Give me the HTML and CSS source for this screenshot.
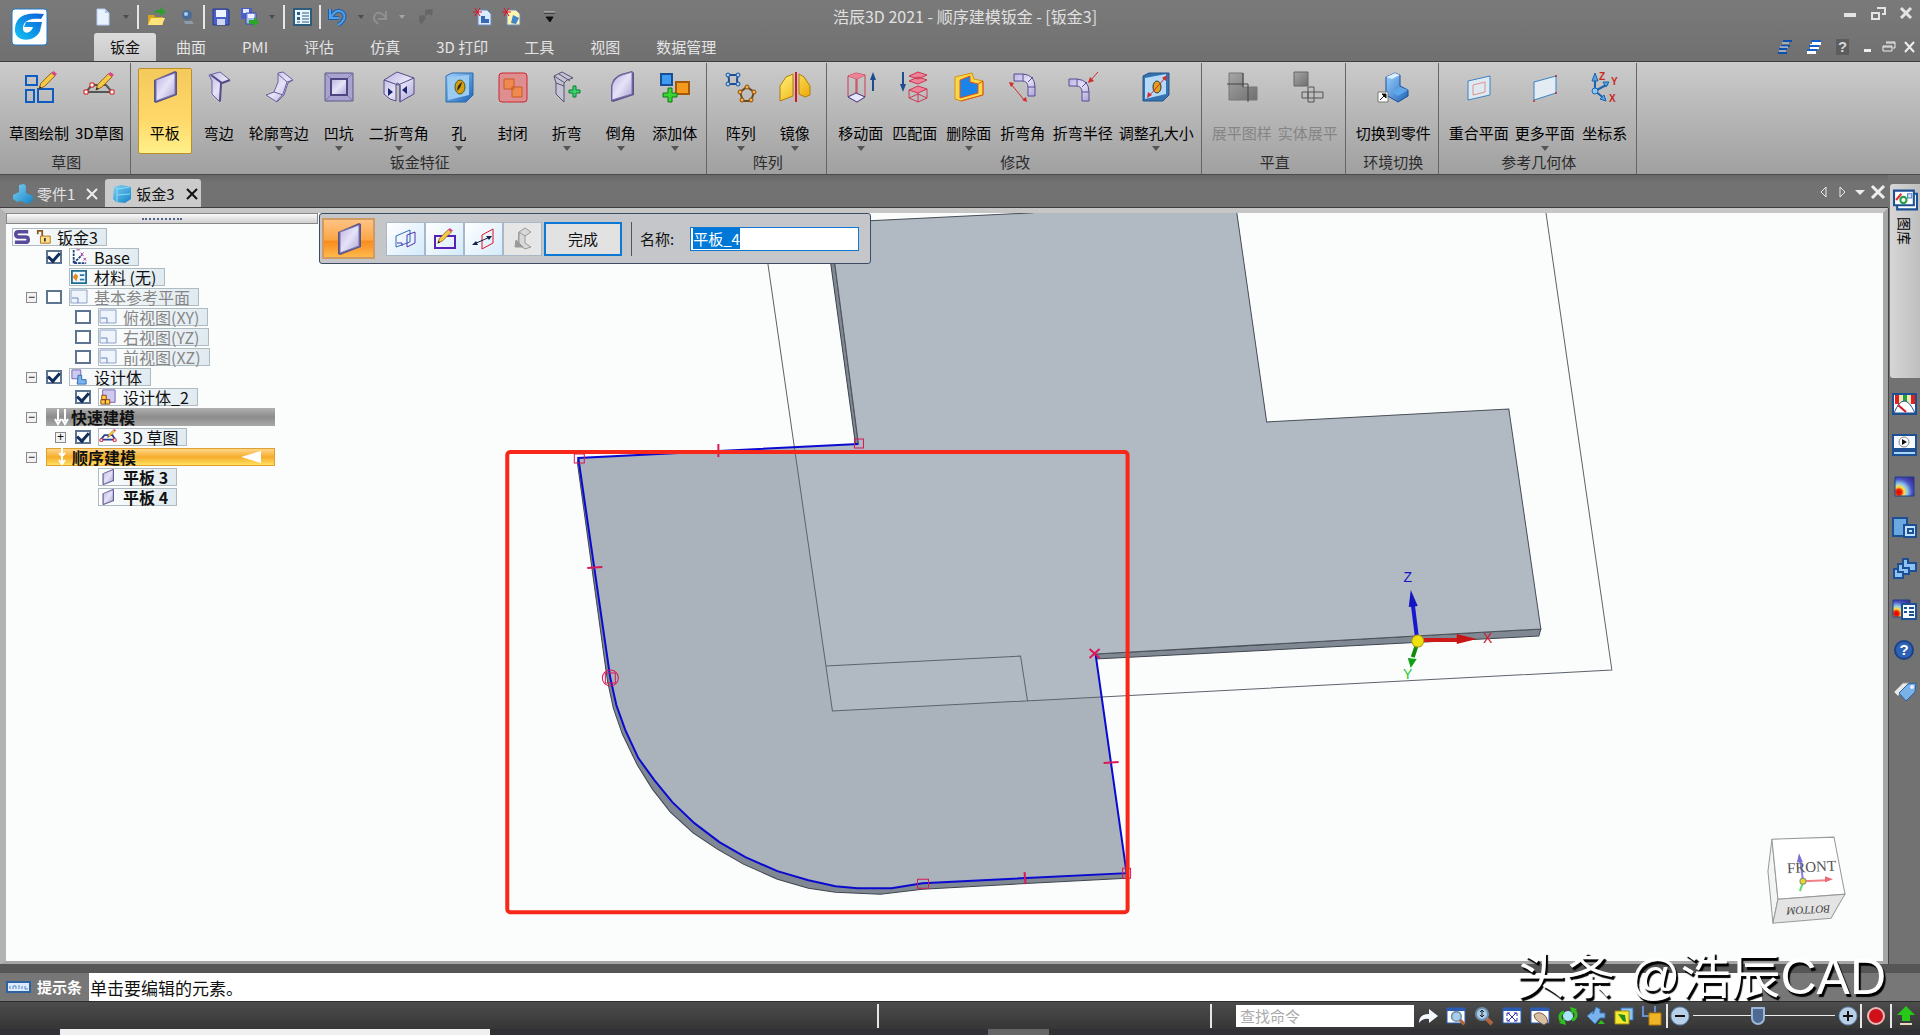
FILE: index.html
```
<!DOCTYPE html>
<html lang="zh-CN">
<head>
  <meta charset="UTF-8" />
  <meta name="viewport" content="width=device-width, initial-scale=1.0"/>
  <title>浩辰3D 2021</title>
  <link rel="stylesheet" href="styles.css">
</head>
<body>
  <svg class="defs" aria-hidden="true">
    <defs>
      <linearGradient id="gLilac" x1="0" y1="0" x2="1" y2="1"><stop offset="0" stop-color="#b9b3e0"/><stop offset=".5" stop-color="#e6e3f8"/><stop offset="1" stop-color="#a9a3d4"/></linearGradient>
      <linearGradient id="gBlue" x1="0" y1="0" x2="1" y2="1"><stop offset="0" stop-color="#9fd4ff"/><stop offset="1" stop-color="#1b62b8"/></linearGradient>
      <linearGradient id="gCyan" x1="0" y1="0" x2="1" y2="1"><stop offset="0" stop-color="#7fd0f5"/><stop offset="1" stop-color="#1583c4"/></linearGradient>
      <linearGradient id="gGold" x1="0" y1="0" x2="1" y2="1"><stop offset="0" stop-color="#fff27a"/><stop offset="1" stop-color="#eca400"/></linearGradient>
      <linearGradient id="gGray" x1="0" y1="0" x2="1" y2="1"><stop offset="0" stop-color="#a5a5a5"/><stop offset="1" stop-color="#6f6f6f"/></linearGradient>
      <linearGradient id="gLogo" x1="1" y1="0" x2="0" y2="1"><stop offset="0" stop-color="#0b5fd8"/><stop offset="1" stop-color="#12c4f4"/></linearGradient>
      <radialGradient id="gHeat" cx="0.2" cy="0.8" r="1"><stop offset="0" stop-color="#e00000"/><stop offset=".15" stop-color="#f02000"/><stop offset=".28" stop-color="#ffe040"/><stop offset=".45" stop-color="#90c8e8"/><stop offset=".7" stop-color="#4a50c0"/><stop offset="1" stop-color="#3b2a90"/></radialGradient>
      <symbol id="plate" viewBox="0 0 32 32"><path d="M5 9 26 0l2 1v23L7 32l-2-1z" fill="#5b5488"/><path d="M7 9 26 2v21L7 30z" fill="url(#gLilac)" stroke="#7d75b0"/></symbol>
      <symbol id="refplane" viewBox="0 0 18 16"><path d="M1 1h16v13H1z" fill="#eef4fa" stroke="#8ba3cc"/><path d="M2 9h6v5" fill="none" stroke="#6a86c0"/></symbol>
      <symbol id="pencil" viewBox="0 0 20 20"><path d="M1 19 3 13 14 2l4 3L7 16z" fill="#f7c948" stroke="#8a5a10"/><path d="m14 2 2-2 4 3-2 2z" fill="#e0408c"/><path d="m1 19 1-3 2 2z" fill="#222"/></symbol>
      <symbol id="magnify" viewBox="0 0 20 20"><path d="m12 12 6 6" stroke="#b0643a" stroke-width="4"/><circle cx="8" cy="8" r="6" fill="#a8cdea" stroke="#6f8ca8" stroke-width="2"/></symbol>
    </defs>
  </svg>

  <header class="header">
    <button class="logo" aria-label="应用程序">
      <svg viewBox="0 0 37 38"><rect x="1" y="1" width="35" height="36" rx="3" fill="#fff" stroke="#1d78c8"/><path d="M33 6C22 5 5 4 4 21c-1 14 20 14 25 2l2-9H15l-2 5h9c-2 7-11 8-10 0 1-7 9-9 18-8z" fill="url(#gLogo)"/></svg>
    </button>
    <div class="quick">
      <button aria-label="新建"><svg viewBox="0 0 20 20"><path d="M4 2h8l4 4v12H4z" fill="#e9f2ff" stroke="#b7cbee"/><path d="M12 2v4h4" fill="#a9c4ee"/></svg></button>
      <i class="caret dim"></i>
      <i class="sep"></i>
      <button aria-label="打开"><svg viewBox="0 0 20 20"><path d="M2 8h6l1 2h8v8H2z" fill="#d9a520"/><path d="m2 18 3-7h14l-3 7z" fill="#ffe27a"/><path d="M8 7q1-5 6-4V0l6 5-6 4V6q-4-1-6 1z" fill="#2f9e2f"/></svg></button>
      <button aria-label="截图"><svg viewBox="0 0 20 20"><circle cx="10" cy="8" r="5" fill="#4b6c96"/><circle cx="9" cy="7" r="2" fill="#a8cdf5"/><path d="M7 14h8l2 3H8z" fill="#8c9aaa"/></svg></button>
      <i class="sep"></i>
      <button aria-label="保存"><svg viewBox="0 0 20 20"><path d="M2 2h15l1 1v15H2z" fill="#4b5fc8" stroke="#26388c"/><path d="M5 3h10v7H5z" fill="#eef3ff"/><path d="M6 12h8v6H6z" fill="#cfd6f2"/></svg></button>
      <button aria-label="另存为"><svg viewBox="0 0 20 20"><path d="M2 1h11v11H2z" fill="#4b5fc8"/><path d="M4 2h6v4H4z" fill="#e4ebff"/><path d="M7 6h10v11H7z" fill="#a9b6ee" stroke="#3b4db0"/><path d="M9 7h6v4H9z" fill="#eef3ff"/><path d="M10 13h5v-3l5 5-5 5v-3h-5z" fill="#27a827"/></svg></button>
      <i class="caret dim"></i>
      <i class="sep"></i>
      <button aria-label="属性"><svg viewBox="0 0 20 20"><path d="M2 2h17v16H2z" fill="#eaf6ff" stroke="#2c5d7c" stroke-width="2"/><path d="M5 5h3v3H5zm0 5h3v3H5z" fill="#2c5d7c"/><path d="M10 6h7M10 9h7M10 12h7M10 15h7M5 15h3" stroke="#2c5d7c"/></svg></button>
      <i class="sep"></i>
      <button aria-label="撤销"><svg viewBox="0 0 20 20"><path d="M3 2v9h9M4 10q4-7 9-6 6 2 4 8-2 4-6 6" fill="none" stroke="#1f5ea8" stroke-width="4"/><path d="M3 2v9h9M4 10q4-7 9-6 6 2 4 8-2 4-6 6" fill="none" stroke="#4fa0ec" stroke-width="2"/></svg></button>
      <i class="caret dim"></i>
      <button aria-label="重做"><svg viewBox="0 0 20 20"><path d="M16 4v8H8M16 11q-4-6-9-5-5 3-2 8l3 3" fill="none" stroke="#8f8f8f" stroke-width="2"/></svg></button>
      <i class="caret light"></i>
      <button aria-label="更新"><svg viewBox="0 0 20 20"><path d="m9 3 8-1-1 7-3-2-4 2zM3 9l5-1 2 3-4 6-3-2z" fill="#666"/></svg></button>
      <i></i>
      <button aria-label="新建零件"><svg viewBox="0 0 20 20"><path d="M5 3h9l4 4v11H5z" fill="#dceafd" stroke="#6f8cc0"/><path d="M8 14v-5h4v3h4v4H8z" fill="#3569b8"/><path d="M0 5h9M2 1l5 8M7 1 2 9" stroke="#e01020"/></svg></button>
      <button aria-label="新建钣金"><svg viewBox="0 0 20 20"><path d="M5 3h9l4 4v11H5z" fill="#fff3b0" stroke="#6f8cc0"/><path d="m9 16 2-8 6 3-3 6z" fill="#3f86c8"/><path d="M0 5h9M2 1l5 8M7 1 2 9" stroke="#e01020"/></svg></button>
      <button aria-label="自定义"><svg viewBox="0 0 20 20"><path d="M4 6h11M6 10h7l-3 5z" fill="#111" stroke="#111"/><path d="M4 5h11" stroke="#ccc"/></svg></button>
    </div>
    <h1 class="title">浩辰3D 2021 - 顺序建模钣金 - [钣金3]</h1>
    <div class="win-controls">
      <button aria-label="最小化"><svg viewBox="0 0 16 16"><path d="M2 8h12v4H2z" fill="#e4e4e4"/></svg></button>
      <button aria-label="还原"><svg viewBox="0 0 16 16"><path d="M7 3h8v6h-3M2 8h7v6H2z" fill="none" stroke="#e4e4e4" stroke-width="2"/></svg></button>
      <button aria-label="关闭"><svg viewBox="0 0 16 16"><path d="m3 3 10 10M13 3 3 13" stroke="#e4e4e4" stroke-width="3"/></svg></button>
    </div>
    <nav class="menu">
      <button class="menu-tab active">钣金</button>
      <button class="menu-tab">曲面</button>
      <button class="menu-tab">PMI</button>
      <button class="menu-tab">评估</button>
      <button class="menu-tab">仿真</button>
      <button class="menu-tab">3D 打印</button>
      <button class="menu-tab">工具</button>
      <button class="menu-tab">视图</button>
      <button class="menu-tab">数据管理</button>
      <div class="mdi">
        <button class="wide" aria-label="展开"><svg viewBox="0 0 16 16"><path d="M6 2h9M4 7h9M2 10h8M1 14h9" stroke="#0d4fae" stroke-width="2"/><path d="M5 4h7M3 8h8M2 12h7" stroke="#d4e8ff"/></svg></button>
        <button class="wide" aria-label="层叠"><svg viewBox="0 0 16 16"><path d="M6 1h9v5H6zM4 5h9v5H4zM1 10h9v5H1z" fill="#fff"/><path d="M5 2h10M3 7h10M1 11h10" stroke="#1560c8" stroke-width="2"/></svg></button>
        <button class="wide help">?</button>
        <button aria-label="最小化文档"><svg viewBox="0 0 16 16"><path d="M4 10h7v3H4z" fill="#eee"/></svg></button>
        <button aria-label="还原文档"><svg viewBox="0 0 16 16"><path d="M5 3h9v6h-2M2 7h9v5H2zM2 8h9M5 4h9" fill="none" stroke="#eee"/></svg></button>
        <button aria-label="关闭文档"><svg viewBox="0 0 16 16"><path d="m3 3 9 10M12 3 3 13" stroke="#eee" stroke-width="2"/></svg></button>
      </div>
    </nav>
  </header>

  <section class="ribbon">
    <div class="group first">
      <div class="tools">
        <button class="tool"><svg viewBox="0 0 32 32"><g fill="none" stroke="#0e5bc4" stroke-width="2"><path d="M3 5h11v9H3zM3 19h8v12H3zM15 18h15v13H15z"/></g><use href="#pencil" x="15" y="0" width="19" height="19"/></svg><span>草图绘制</span></button>
        <button class="tool"><svg viewBox="0 0 32 32"><path d="M3 28h26" stroke="#bbb" stroke-width="3"/><path d="M3 21 9 14h14l6 7z" fill="none" stroke="#555" stroke-width="2"/><path d="M1 19h4v4H1zM27 19h4v4h-4zM7 12h4v4H7z" fill="#fff" stroke="#d01818"/><use href="#pencil" x="12" y="1" width="19" height="19"/></svg><span>3D草图</span></button>
      </div>
      <div class="group-name">草图</div>
    </div>
    <div class="group">
      <div class="tools">
        <button class="tool active"><svg><use href="#plate"/></svg><span>平板</span></button>
        <button class="tool"><svg viewBox="0 0 32 32"><path d="M6 4 17 1l10 8-9 3-1 19-8-8V10z" fill="url(#gLilac)" stroke="#6a639c"/><path d="m8 4 11 8 8-3M18 12l-1 18" fill="none" stroke="#544d88" stroke-width="2"/></svg><span>弯边</span></button>
        <button class="tool"><svg viewBox="0 0 32 32"><path d="m15 2 5-1 10 8-5 3-4 12-7 7-11-7 8-3 4-10z" fill="url(#gLilac)" stroke="#6a639c"/><path d="m15 3 9 8 6-2M24 11l-4 12-6 7M11 21l9 3" fill="none" stroke="#6a639c"/></svg><span>轮廓弯边</span><i class="drop"></i></button>
        <button class="tool"><svg viewBox="0 0 32 32"><path d="M2 2h28v28H2z" fill="#a9a3cf" stroke="#5b5488"/><path d="m2 2 6 6v16l-6 6M30 2l-6 6M30 30l-6-6" fill="none" stroke="#7c75aa"/><path d="M8 8h16v16H8z" fill="url(#gLilac)" stroke="#4d4680" stroke-width="2"/></svg><span>凹坑</span><i class="drop"></i></button>
        <button class="tool"><svg viewBox="0 0 32 32"><path d="M1 9 14 1l17 6v16l-9 5-5 3V14q-3-4-4 0v16l-6-2-6-5z" fill="url(#gLilac)" stroke="#544d88"/><path d="m1 9 14 5 16-7M17 14v17" fill="none" stroke="#544d88"/><path d="m5 17 5 4-5 4zM24 15v8l-5-4z" fill="#1d2470"/></svg><span>二折弯角</span><i class="drop"></i></button>
        <button class="tool"><svg viewBox="0 0 32 32"><path d="M3 5 9 2h21v22l-7 7H3z" fill="url(#gBlue)" stroke="#2a6aa8"/><path d="M5 6 26 4v20L5 29z" fill="#9ccbf1"/><ellipse cx="17" cy="16" rx="5" ry="7" fill="#d89d10" stroke="#4d5a20"/><path d="M19 11q-1 6-5 9 0-6 5-9" fill="#2b2b20"/></svg><span>孔</span><i class="drop"></i></button>
        <button class="tool"><svg viewBox="0 0 32 32"><rect x="2" y="2" width="28" height="29" rx="3" fill="#de8e8e" stroke="#cf2533"/><path d="M7 8h10v10H7zM15 16h10v10H15z" fill="#ef8a4e" stroke="#c55a26"/></svg><span>封闭</span></button>
        <button class="tool"><svg viewBox="0 0 32 32"><path d="m3 5 8-4 11 6-6 2-3 3v19l-8-8V12z" fill="#c6c4d4" stroke="#555270"/><path d="m8 3 11 7M5 12l8 3M3 5l11 7" fill="none" stroke="#555270"/><path d="M22 15h3v4h4v3h-4v4h-3v-4h-4v-3h4z" fill="#3bd46a" stroke="#0d7c34"/></svg><span>折弯</span><i class="drop"></i></button>
        <button class="tool"><svg viewBox="0 0 32 32"><path d="M6 15Q8 6 16 3l11-3 2 2v22L8 31l-2-1z" fill="#5b5488"/><path d="M7 15Q9 7 17 4l10-3v22L7 29z" fill="url(#gLilac)" stroke="#7d75b0"/></svg><span>倒角</span><i class="drop"></i></button>
        <button class="tool"><svg viewBox="0 0 32 32"><path d="M2 3h11v11H2z" fill="#3f9bf2" stroke="#174f96" stroke-width="2"/><path d="M17 11h13v12H17z" fill="#f59a1d" stroke="#a05a08" stroke-width="2"/><path d="M9 17h4v5h5v4h-5v5H9v-5H4v-4h5z" fill="#38d434" stroke="#107a12"/></svg><span>添加体</span><i class="drop"></i></button>
      </div>
      <div class="group-name">钣金特征</div>
    </div>
    <div class="group">
      <div class="tools">
        <button class="tool"><svg viewBox="0 0 32 32"><path d="M3 4h10q-2 5 0 9H3q2-4 0-9z" fill="none" stroke="#1d4f94" stroke-width="2"/><g fill="#9fd0ff" stroke="#1d4f94"><circle cx="3" cy="4" r="2"/><circle cx="13" cy="4" r="2"/><circle cx="3" cy="13" r="2"/><circle cx="13" cy="13" r="2"/></g><path d="m22 16 7 5-3 9h-8l-3-9z" fill="none" stroke="#6a4a20" stroke-width="2"/><g fill="#ffb14a" stroke="#8a4d0c"><circle cx="22" cy="16" r="2"/><circle cx="29" cy="21" r="2"/><circle cx="26" cy="29" r="2"/><circle cx="17" cy="29" r="2"/><circle cx="15" cy="21" r="2"/></g></svg><span>阵列</span><i class="drop"></i></button>
        <button class="tool"><svg viewBox="0 0 32 32"><path d="m1 15 6-9 7-3v22L1 30zM20 3l5 3 6 9v9l-5 2-6-3z" fill="url(#gGold)" stroke="#b07c08"/><path d="M17 1v30" stroke="#d01822" stroke-width="2"/></svg><span>镜像</span><i class="drop"></i></button>
      </div>
      <div class="group-name">阵列</div>
    </div>
    <div class="group">
      <div class="tools">
        <button class="tool"><svg viewBox="0 0 32 32"><path d="m3 5 8-3 9 2-8 4zM3 5v21l9 5V8M20 4v22l-8 5M3 26l8-4 9 4M11 2v20" fill="none" stroke="#c93a55"/><path d="m3 5 8-3 9 2-8 4z" fill="#ee8296"/><path d="m3 26 8-4 9 4-8 5z" fill="#e6e6ff" stroke="#444488"/><path d="M28 20V7" stroke="#1c4d90" stroke-width="2"/><path d="m28 1 3 8h-6z" fill="#1c4d90"/></svg><span>移动面</span><i class="drop"></i></button>
        <button class="tool"><svg viewBox="0 0 32 32"><path d="M4 1v14" stroke="#1c4d90" stroke-width="2"/><path d="m4 21-3-8h6z" fill="#1c4d90"/><g fill="#ee8296" stroke="#c93a55"><path d="m10 5 9-4 9 3-9 4zM10 10l9-4 9 3-9 4zM10 19l9-4 9 3-9 4z"/><path d="M10 19v8l9 4 9-4v-9M19 22v9M10 27l9-4 9 4" fill="none"/></g></svg><span>匹配面</span></button>
        <button class="tool"><svg viewBox="0 0 32 32"><path d="M2 6 19 2l2 6 9 2v14L8 30l-6-2z" fill="#f8d84a" stroke="#d89008"/><path d="M7 9 17 5v6l8 2v9L7 27z" fill="#1a83ea" stroke="#e2521c"/><path d="m25 13 5-3v14L8 30" fill="none" stroke="#e2521c"/></svg><span>删除面</span><i class="drop"></i></button>
        <button class="tool"><svg viewBox="0 0 32 32"><path d="M7 3h9q12 1 12 13v9h-7v-9q0-6-6-6H7z" fill="url(#gLilac)" stroke="#564c94"/><path d="M16 3v7M21 16h7M26 6l-5 5" stroke="#564c94"/><path d="m4 13 14 17" stroke="#d32a2a"/><path d="m2 11 5 1-3 4zM20 31l-5-2 4-3z" fill="#d32a2a"/></svg><span>折弯角</span></button>
        <button class="tool"><svg viewBox="0 0 32 32"><path d="M2 8h8q12 1 12 13v9h-7v-9q0-6-6-6H2z" fill="url(#gLilac)" stroke="#564c94"/><path d="M10 8v7M15 21h7M20 11l-5 5" stroke="#564c94"/><path d="m31 1-8 9" stroke="#d32a2a"/><path d="m21 12 2-6 4 4z" fill="#d32a2a"/></svg><span>折弯半径</span></button>
        <button class="tool"><svg viewBox="0 0 32 32"><path d="M3 5 9 2h20v22l-6 6H3z" fill="#3572b0" stroke="#245488"/><path d="M5 7 26 3v20L5 28z" fill="#b4daf8"/><ellipse cx="17" cy="16" rx="4" ry="6" fill="#e0a020" stroke="#333"/><path d="M9 25 25 7" stroke="#d32a2a"/><path d="m27 4-1 6-4-3zM7 27l1-6 4 3z" fill="#d32a2a"/></svg><span>调整孔大小</span><i class="drop"></i></button>
      </div>
      <div class="group-name">修改</div>
    </div>
    <div class="group">
      <div class="tools">
        <button class="tool" disabled><svg viewBox="0 0 32 32"><path d="M3 2h14v14h14v13H3z" fill="url(#gGray)" stroke="#777"/><path d="M1 13h21v18M17 2v14" fill="none" stroke="#444"/></svg><span>展平图样</span></button>
        <button class="tool" disabled><svg viewBox="0 0 32 32"><path d="M2 1h14v14H2z" fill="url(#gGray)" stroke="#666"/><path d="M10 21h21v6H10zM16 16v15M22 16v15M16 16h6M16 31h6M16 21v6" fill="none" stroke="#555"/></svg><span>实体展平</span></button>
      </div>
      <div class="group-name">平直</div>
    </div>
    <div class="group">
      <div class="tools">
        <button class="tool"><svg viewBox="0 0 32 32"><path d="m9 6 9-4 5 2v11l8 4v6l-10 6-12-7z" fill="url(#gBlue)" stroke="#1a4e96"/><path d="m9 6 9-4 5 2-8 4z" fill="#d9eeff"/><path d="m15 21 8-5 8 3-10 6z" fill="#5ea6ea"/><path d="M1 21h10v10H1z" fill="#fff" stroke="#777"/><path d="m3 29 4-4M5 23h4v4z" fill="#111" stroke="#111"/></svg><span>切换到零件</span></button>
      </div>
      <div class="group-name">环境切换</div>
    </div>
    <div class="group">
      <div class="tools">
        <button class="tool"><svg viewBox="0 0 32 32"><path d="m5 10 22-5v19L5 29z" fill="#dfe9f1" stroke="#3c82c4"/><path d="m10 14 12-3v10l-12 3z" fill="none" stroke="#e09090"/></svg><span>重合平面</span></button>
        <button class="tool"><svg viewBox="0 0 32 32"><path d="m5 11 22-6v17L5 29z" fill="#e3ecf3" stroke="#3c82c4"/><g fill="#c02828"><circle cx="27" cy="5" r="1"/><circle cx="27" cy="22" r="1"/><circle cx="5" cy="30" r="1"/></g></svg><span>更多平面</span><i class="drop"></i></button>
        <button class="tool"><svg viewBox="0 0 32 32"><path d="M6 20V6M6 20l13-7M6 20l10 8" stroke="#1d62b0" stroke-width="2"/><path d="m6 2 3 8H3zM20 11h-6l3 5zM17 30l-6-2 4-4z" fill="#5ba2e0" stroke="#1d62b0"/><circle cx="6" cy="20" r="3" fill="#8ec8f5" stroke="#1d62b0"/><g class="axis-name"><text x="10" y="9">Z</text><text x="22" y="14">Y</text><text x="20" y="31">X</text></g></svg><span>坐标系</span></button>
      </div>
      <div class="group-name">参考几何体</div>
    </div>
  </section>

  <div class="work">
    <main class="main">
      <div class="doc-tabs">
        <div class="doc-tab">
          <svg viewBox="0 0 22 20"><path d="m6 1 5-1 2 2v7l7 3v5l-6 3-6-3-4 1-4-3v-4l6-3z" fill="url(#gCyan)"/></svg>
          <span>零件1</span>
          <button aria-label="关闭零件1"><svg viewBox="0 0 12 12"><path d="m1 1 10 10M11 1 1 11" stroke="#eee" stroke-width="2"/></svg></button>
        </div>
        <div class="doc-tab active">
          <svg viewBox="0 0 22 20"><path d="m2 3 7-2 10 2v12l-6 4-9-1-3-3z" fill="url(#gCyan)"/><path d="m2 3 3 2v13M5 5l13-2M5 11l13-1" fill="none" stroke="#8adcf8"/></svg>
          <span>钣金3</span>
          <button aria-label="关闭钣金3"><svg viewBox="0 0 12 12"><path d="m1 1 10 10M11 1 1 11" stroke="#111" stroke-width="2"/></svg></button>
        </div>
        <div class="doc-nav">
          <button aria-label="上一个"><svg viewBox="0 0 16 16"><path d="M10 3v10L5 8z" fill="none" stroke="#eee"/></svg></button>
          <button aria-label="下一个"><svg viewBox="0 0 16 16"><path d="M6 3v10l5-5z" fill="none" stroke="#eee"/></svg></button>
          <button aria-label="文档列表"><svg viewBox="0 0 16 16"><path d="M3 6h10l-5 5z" fill="#eee"/></svg></button>
          <button aria-label="关闭当前文档"><svg viewBox="0 0 16 16"><path d="m2 2 12 12M14 2 2 14" stroke="#eee" stroke-width="3"/></svg></button>
        </div>
      </div>

      <div class="viewport">
        <svg class="model" viewBox="6 213 1876 748" preserveAspectRatio="xMidYMid slice">
          <defs><clipPath id="plane"><path d="M759 205 1544 205 1611 670 832 711z"/></clipPath></defs>
          <!-- sheet thickness -->
          <path d="M858 444 829 223l-4 2 30 219zM1095 654l445-25-2 7-443 23z" fill="#808894" stroke="#3f454d"/>
          <path d="M578 458 577 462 607 680 613 708 622 734 637 765 652 789 670 812 693 833 717 849 743 864 777 879 808 888 835 892 880 894 922 889 1126 878V873L922 870z" fill="#808894" stroke="#3f454d"/>
          <!-- face -->
          <path id="face" d="M829 223 1033 213 1033 205 1235 205 1266 422 1508 409 1540 629 1095 654 1126 873 922 883 891 888 857 888 835 886 808 880 777 871 745 857 719 842 694 823 672 802 654 780 638 758 625 730 616 705 610 678 578 458 858 444z" fill="#aab2bb"/>
          <use href="#face" clip-path="url(#plane)" class="face-light"/>
          <path d="M858 444 829 223 1033 213M1235 205l31 217 242-13 32 220-445 25" fill="none" stroke="#4a5058"/>
          <!-- reference plane -->
          <path d="M759 205 832 711 1611 670 1544 205M825 666l195-10 7 45" fill="none" stroke="#5c636b"/>
          <!-- sketch -->
          <path d="M858 444 578 458 610 678 616 705 625 730 638 758 654 780 672 802 694 823 719 842 745 857 777 871 808 880 835 886 857 888 891 888 922 883 1126 873 1095 654" fill="none" stroke="#0a0ad0" stroke-width="2"/>
          <g fill="none" stroke="#d81858">
            <path d="M854 439h9v9h-9zM574 454h10v9h-10zM917 879h11v9h-11zM1122 868h8v10h-8zM605 673h10v10h-10z"/>
            <circle cx="610" cy="678" r="8"/>
            <path d="M718 444v13M587 568l15-1M1103 763l15-1M1024 872l1 12M1089 649l10 9M1099 649l-10 9" stroke-width="2"/>
          </g>
          <rect x="507" y="452" width="620" height="460" rx="3" fill="none" stroke="#f7281a" stroke-width="4"/>
          <!-- origin triad -->
          <path d="M1416 636 1412 604" stroke="#1818d0" stroke-width="4"/><path d="m1410 590 7 16-9 1z" fill="#1414c0"/>
          <path d="M1420 640h38" stroke="#d01818" stroke-width="4"/><path d="m1476 639-20-5v10z" fill="#c81414"/>
          <path d="m1416 645-4 12" stroke="#108a10" stroke-width="4"/><path d="m1407 658 9 1-6 9z" fill="#10a018"/>
          <circle cx="1417" cy="641" r="6" fill="#f0e010" stroke="#a89a10"/>
          <g class="triad-name">
            <text x="1407" y="582" fill="#1414c8">Z</text>
            <text x="1487" y="643" fill="#d01830">X</text>
            <text x="1407" y="679" fill="#20c830">Y</text>
          </g>
          <!-- view cube -->
          <g fill="#fff" stroke="#999">
            <path d="M1771 839l-4 32 5 52 5-24z" fill="#f4f4f4"/>
            <path d="m1771 839 62-2 11 57-67 5z"/>
            <path d="m1777 899 67-5-14 24-58 5z" fill="#e4e4e4"/>
          </g>
          <path d="m1802 880-3-22" stroke="#8a7ee0" stroke-width="2"/><path d="m1798 853 4 9h-6z" fill="#7a6ed8"/>
          <path d="m1802 881 24-1" stroke="#f08088" stroke-width="2"/><path d="m1832 879-8-3v6z" fill="#e86a74"/>
          <path d="m1802 882-3 9" stroke="#60e060" stroke-width="2"/>
          <circle cx="1802" cy="881" r="3" fill="#e4dc20" stroke="#888"/>
          <text class="cube-front" x="1786" y="872" transform="rotate(-3 1805 868)">FRONT</text>
          <text class="cube-bottom" x="0" y="0" transform="translate(1829 905) rotate(177)">BOTTOM</text>
        </svg>

        <aside class="tree">
          <div class="grip"></div>
          <ul>
            <li class="root"><span class="node"><svg viewBox="0 0 18 18"><path d="M16 3H5Q2 3 2 6t3 3h8q3 0 3 3t-3 3H1" fill="none" stroke="#5a4a9a" stroke-width="4"/></svg><svg viewBox="0 0 18 18"><path d="M2 6V2h5v6" fill="none" stroke="#8a5a20" stroke-width="2"/><path d="M5 8h11v8H5z" fill="#ffdf8a" stroke="#a86a10"/><path d="M10 10v4" stroke="#333" stroke-width="2"/></svg>钣金3</span></li>
            <li class="l1"><input type="checkbox" checked aria-label="Base"><span class="node"><svg viewBox="0 0 18 18"><path d="M3 1v15h14M3 16 12 7" fill="none" stroke="#1d3f7c" stroke-width="2" stroke-dasharray="3 1"/><path d="M6 1h4M11 4l3 4M14 4l-3 4M14 10l3 3M17 10l-3 3" stroke="#a02890"/></svg>Base</span></li>
            <li class="l1"><span class="node"><svg viewBox="0 0 18 18"><path d="M1 2h16v14H1z" fill="#eef8ff" stroke="#1d6a94" stroke-width="2"/><path d="m2 9 3-4 3 3-2 6z" fill="#e88a20"/><path d="M10 7h5M10 12h5" stroke="#2a7aa8" stroke-width="2"/></svg>材料 (无)</span></li>
            <li class="l1"><button class="expander" aria-label="折叠">−</button><input type="checkbox" aria-label="基本参考平面"><span class="node dim"><svg><use href="#refplane"/></svg>基本参考平面</span></li>
            <li class="l2"><input type="checkbox" aria-label="俯视图"><span class="node dim"><svg><use href="#refplane"/></svg>俯视图(XY)</span></li>
            <li class="l2"><input type="checkbox" aria-label="右视图"><span class="node dim"><svg><use href="#refplane"/></svg>右视图(YZ)</span></li>
            <li class="l2"><input type="checkbox" aria-label="前视图"><span class="node dim"><svg><use href="#refplane"/></svg>前视图(XZ)</span></li>
            <li class="l1"><button class="expander" aria-label="折叠">−</button><input type="checkbox" checked aria-label="设计体"><span class="node"><svg viewBox="0 0 18 18"><path d="M1 1h10v10H1z" fill="#cfc8f0" stroke="#6a60a8"/><path d="M8 7h4v5h5v5H7z" fill="#7cb4ee" stroke="#2a62b0"/></svg>设计体</span></li>
            <li class="l2"><input type="checkbox" checked aria-label="设计体_2"><span class="node"><svg viewBox="0 0 18 18"><path d="M3 1h14v14H3z" fill="#cfc8f0" stroke="#6a60a8"/><path d="M1 12h5v5H1zM6 12h5v5H6zM2 7h5v5H2z" fill="#ffd040" stroke="#8a3a10"/></svg>设计体_2</span></li>
            <li class="l1"><button class="expander" aria-label="折叠">−</button><div class="bar"><svg viewBox="0 0 18 18"><path d="M6 1v12M13 1v12M3 11l3 5 3-5M10 11l3 5 3-5" fill="none" stroke="#fff" stroke-width="2"/></svg>快速建模</div></li>
            <li class="l2"><button class="expander" aria-label="展开">+</button><input type="checkbox" checked aria-label="3D 草图"><span class="node"><svg viewBox="0 0 18 18"><path d="M1 12 5 7h9l3 5z" fill="none" stroke="#2a3f9a" stroke-width="2"/><path d="M0 11h3v3H0zM15 11h3v3h-3z" fill="#fff" stroke="#e02020"/><use href="#pencil" x="8" y="0" width="10" height="10"/></svg>3D 草图</span></li>
            <li class="l1"><button class="expander" aria-label="折叠">−</button><div class="bar ordered"><svg viewBox="0 0 18 18"><path d="M9 0v16M6 5l3 3 3-3M6 12l3 4 3-4" fill="none" stroke="#fff" stroke-width="2"/></svg>顺序建模<i class="pointer"></i></div></li>
            <li class="l2"><span class="node strong"><svg><use href="#plate"/></svg>平板 3</span></li>
            <li class="l2"><span class="node strong"><svg><use href="#plate"/></svg>平板 4</span></li>
          </ul>
        </aside>

        <form class="command" onsubmit="return false">
          <button class="step current" aria-label="平板"><svg><use href="#plate"/></svg></button>
          <div class="steps">
            <button class="step" aria-label="平面"><svg viewBox="0 0 24 24"><path d="m2 9 14-6v12L2 20z" fill="none" stroke="#2f6cb8"/><path d="m13 8 8-3v11l-8 4zM3 16h5v3" fill="none" stroke="#5530b0"/></svg></button>
            <button class="step" aria-label="绘制轮廓"><svg viewBox="0 0 24 24"><path d="M2 9h20v12H2z" fill="none" stroke="#5a1fb8" stroke-width="2"/><use href="#pencil" x="4" y="1" width="16" height="16"/></svg></button>
            <button class="step" aria-label="方向"><svg viewBox="0 0 24 24"><path d="m10 8 11-6v14l-11 6z" fill="none" stroke="#e01028"/><path d="m2 17 16-7" stroke="#16204a"/><path d="m0 18 4-4 2 4zM20 9l-6 0 3 4z" fill="#16204a"/></svg></button>
            <button class="step off" aria-label="厚度" disabled><svg viewBox="0 0 24 24"><path d="m8 5 6-4 6 4-6 4v7l6 4-6 2-7-5z" fill="#d8d8d8" stroke="#999"/><path d="m5 13 7 7H4zM8 5v12M14 9 8 5" fill="#999" stroke="#999"/></svg></button>
          </div>
          <button class="finish">完成</button>
          <div class="field">
            <label for="feature-name">名称:</label>
            <input type="text" id="feature-name" value="平板_4">
          </div>
        </form>
      </div>
    </main>

    <aside class="side">
      <button class="side-tab">
        <svg viewBox="0 0 24 20"><path d="M4 4h19v15H4z" fill="#fff" stroke="#1d4f94" stroke-width="2"/><path d="M1 1h19v14H1z" fill="#fff" stroke="#1d4f94" stroke-width="2"/><circle cx="10" cy="10" r="3" fill="none" stroke="#28a048" stroke-width="2"/><path d="m3 10 5-6" stroke="#e03030" stroke-width="2"/><path d="M14 4h4v4h-4z" fill="#cfe4ff" stroke="#5080c0"/></svg>
        <span>图库</span>
      </button>
      <button aria-label="传感器"><svg viewBox="0 0 25 22"><path d="M1 1h23v20H1z" fill="#fff" stroke="#1d4f94" stroke-width="2"/><path d="M3 2h4v9H3z" fill="#e02020"/><path d="M7 2h4v9H7z" fill="#f4e8b0"/><path d="M11 2h4v9h-4z" fill="#20a040"/><path d="M15 2h4v9h-4z" fill="#f4e8b0"/><path d="M19 2h4v9h-4z" fill="#e02020"/><path d="M2 20q10-24 21 0z" fill="#fff" stroke="#1d4f94"/><path d="m6 12 8 7" stroke="#d01828" stroke-width="2"/></svg></button>
      <button aria-label="播放器"><svg viewBox="0 0 25 22"><path d="M1 1h23v14H1z" fill="#f4faff" stroke="#1d4f94" stroke-width="2"/><circle cx="12" cy="8" r="5" fill="#fff" stroke="#888"/><path d="m10 5 5 3-5 3z" fill="#111"/><path d="M1 17h23v4H1z" fill="#a8d4f8" stroke="#1d4f94" stroke-width="2"/></svg></button>
      <button aria-label="仿真"><svg viewBox="0 0 25 22"><path d="M3 2h19v19H3z" fill="url(#gHeat)" stroke="#1d3f8c"/></svg></button>
      <button aria-label="图层"><svg viewBox="0 0 25 22"><path d="M1 2h14v18H1z" fill="#6aa8e0" stroke="#1d4f94" stroke-width="2"/><path d="M12 9h12v12H12z" fill="#bfe0ff" stroke="#1d4f94" stroke-width="2"/><path d="M16 13h5v4h-5z" fill="none" stroke="#1d4f94" stroke-width="2"/></svg></button>
      <button aria-label="零件族"><svg viewBox="0 0 25 22"><g fill="#8cc2f4" stroke="#1d4f94" stroke-width="2"><path d="M11 2h5v4h8v8H11z"/><path d="M6 7h5v4h6v6H6z"/><path d="M2 12h4v3h5v6H2z"/></g></svg></button>
      <button aria-label="结果"><svg viewBox="0 0 25 22"><path d="M1 2h17v17H1z" fill="url(#gHeat)" stroke="#1d3f8c"/><path d="M10 6h14v15H10z" fill="#f4faff" stroke="#1d4f94" stroke-width="2"/><path d="M12 10h3M17 10h5M12 14h3M17 14h5M17 17h5" stroke="#1d4f94" stroke-width="2"/></svg></button>
      <button class="round-help">?</button>
      <button aria-label="标签"><svg viewBox="0 0 25 22"><path d="m2 12 9-9 6 0-11 13z" fill="#e8e8e8" stroke="#999"/><path d="m7 13 9-9 8-1-1 9-9 9z" fill="#79b1e8" stroke="#2a62a0"/><circle cx="20" cy="7" r="2" fill="#eef"/></svg></button>
    </aside>
  </div>

  <div class="prompt">
    <div class="prompt-label"><svg viewBox="0 0 25 12"><path d="M1 1h23v10H1z" fill="#dcebff" stroke="#2d62a4" stroke-width="2"/><path d="M4 8V5M7 8V5h3v3M13 8V4M16 8V5M19 5v3h3" fill="none" stroke="#5a86c0"/></svg>提示条</div>
    <div class="prompt-text">单击要编辑的元素。</div>
  </div>

  <footer class="status">
    <i class="sep first"></i>
    <i class="sep second"></i>
    <input type="text" placeholder="查找命令" aria-label="查找命令">
    <div class="status-icons">
      <button aria-label="查找"><svg viewBox="0 0 20 20"><path d="M1 17q0-9 10-9V3l9 7-9 7v-4q-6-1-10 4z" fill="#f4faff"/></svg></button>
      <button aria-label="区域缩放"><svg viewBox="0 0 20 20"><path d="M1 2h18v15H1z" fill="#fff" stroke="#2b5cb4"/><path d="M1 2h18v3H1z" fill="#2b5cb4"/><use href="#magnify" x="4" y="4" width="16" height="16"/></svg></button>
      <button aria-label="缩放"><svg viewBox="0 0 20 20"><use href="#magnify"/><path d="M8 4v7M6 6l2-2 2 2M6 9l2 2 2-2" fill="none" stroke="#222"/></svg></button>
      <button aria-label="适合"><svg viewBox="0 0 20 20"><path d="M1 2h18v15H1z" fill="#fff" stroke="#2b5cb4"/><path d="M1 2h18v3H1z" fill="#2b5cb4"/><path d="m6 7 8 8M14 7l-8 8M5 10V7h3M12 7h3v3M5 12v3h3M12 15h3v-3" fill="none" stroke="#3030b0"/></svg></button>
      <button aria-label="平移"><svg viewBox="0 0 20 20"><path d="M1 2h18v15H1z" fill="#fff" stroke="#2b5cb4"/><path d="M1 2h18v3H1z" fill="#2b5cb4"/><path d="M4 9q4-4 9-1 4 2 5 8l-4 3-5-3q-5-3-5-7z" fill="#d8bfa4" stroke="#7a6048"/></svg></button>
      <button aria-label="旋转"><svg viewBox="0 0 20 20"><circle cx="10" cy="10" r="5" fill="#a8e4f8"/><path d="M3 15Q0 8 6 6M17 5q3 7-3 9" fill="none" stroke="#30c020" stroke-width="3"/><path d="m12 1 7 2-5 5zM8 19l-7-2 5-5z" fill="#30c020"/></svg></button>
      <button aria-label="视向"><svg viewBox="0 0 20 20"><path d="m1 10 6-5v3l3-7 4 2v4h5v5h-5l-5 6-3-3z" fill="#7ab2ec" stroke="#3a70b4"/><path d="m15 14 4 4h-7z" fill="#30c020"/></svg></button>
      <button aria-label="视图样式"><svg viewBox="0 0 20 20"><path d="M7 2h12v12H7z" fill="#8cc0f0" stroke="#3a70b4"/><path d="M1 5h14v13H1z" fill="#f4e830" stroke="#a09010"/><path d="m4 8 7 1 1 7-3-1z" fill="#208a20"/></svg></button>
      <button aria-label="着色"><svg viewBox="0 0 20 20"><path d="M1 0v10h6M13 0v6" fill="none" stroke="#6a8fd0" stroke-width="2"/><path d="M7 7h12v12H7z" fill="#f0b428" stroke="#b07808"/></svg></button>
    </div>
    <i class="sep"></i>
    <div class="zoom">
      <button aria-label="缩小"><svg viewBox="0 0 20 20"><circle cx="10" cy="10" r="9" fill="#b8cfe8" stroke="#6e8fb8"/><path d="M5 10h10" stroke="#111" stroke-width="2"/></svg></button>
      <input type="range" min="0" max="100" value="45" aria-label="缩放比例">
      <button aria-label="放大"><svg viewBox="0 0 20 20"><circle cx="10" cy="10" r="9" fill="#b8cfe8" stroke="#6e8fb8"/><path d="M5 10h10M10 5v10" stroke="#111" stroke-width="2"/></svg></button>
    </div>
    <i class="sep"></i>
    <button class="status-end" aria-label="录制"><svg viewBox="0 0 20 20"><circle cx="10" cy="10" r="8" fill="#d01018" stroke="#e8b8b8" stroke-width="2"/></svg></button>
    <i class="sep"></i>
    <button class="status-end" aria-label="上传"><svg viewBox="0 0 20 20"><path d="m10 0 9 9h-5v6H6V9H1z" fill="#28c818"/><path d="M4 18h12" stroke="#e8d8c0" stroke-width="2"/></svg></button>
  </footer>
  <div class="taskbar"><i class="task-search"></i><i class="task-active"></i></div>

  <div class="watermark">头条 @浩辰CAD</div>

  <script>
    const nameInput = document.getElementById("feature-name");
    nameInput.focus();
    nameInput.select();
  </script>
</body>
</html>
```
FILE: styles.css
```
:root {
  --chrome: #727272;
  --canvas: #fbfdfd;
  --line: #3e3e3e;
  --accent: #0f78d4;
}

* {
  box-sizing: border-box;
}

body {
  margin: 0;
  height: 100vh;
  display: flex;
  flex-direction: column;
  overflow: hidden;
  background: var(--chrome);
  font-family: "Noto Sans CJK SC", "Liberation Sans", sans-serif;
  font-size: 15px;
  line-height: 20px;
  color: #111;
}

button {
  padding: 0;
  border: none;
  background: none;
  font: inherit;
  color: inherit;
}

svg {
  display: block;
}

.defs {
  position: absolute;
  width: 0;
  height: 0;
}

/* header */
.header {
  display: grid;
  grid-template-columns: 90px 1fr auto 1fr 80px;
  grid-template-rows: 33px 28px;
  background: linear-gradient(#7a7a7a, #707070);
}

.logo {
  grid-row: 1 / 3;
  padding: 8px 0 0 11px;
  align-self: start;
}

.logo svg {
  width: 37px;
  height: 38px;
}

.quick {
  display: grid;
  grid-template-columns: 26px 20px 4px 32px 30px 4px 30px 26px 20px 4px 32px 4px 30px 18px 20px 24px 24px 30px 30px 28px 48px;
  align-items: center;
  justify-items: center;
}

.quick svg {
  width: 20px;
  height: 20px;
}

.sep {
  width: 2px;
  height: 24px;
  background: #e6e6e6;
}

.caret {
  border: 3px solid transparent;
  border-top: 4px solid #4c4c4c;
  border-bottom: none;
}

.caret.light {
  border-top-color: #a4a4a4;
}

.title {
  margin: 0;
  font-size: 16px;
  font-weight: normal;
  line-height: 33px;
  color: #e0e0e0;
}

.win-controls {
  grid-column: 5;
  display: flex;
  justify-content: flex-end;
  align-items: center;
  gap: 12px;
  padding: 0 6px 8px 0;
}

.win-controls svg {
  width: 16px;
  height: 16px;
}

.menu {
  grid-column: 2 / 6;
  display: flex;
  gap: 4px;
  padding-left: 4px;
}

.menu-tab {
  padding: 0 16px;
  border-radius: 3px 3px 0 0;
  color: #e4e4e4;
}

.menu-tab.active {
  background: linear-gradient(#dcdcdc, #cacaca);
  color: #111;
}

.mdi {
  margin-left: auto;
  display: flex;
  align-items: center;
}

.mdi button {
  width: 21px;
}

.mdi .wide {
  width: 29px;
}

.mdi svg {
  width: 16px;
  height: 16px;
  margin: auto;
}

.mdi .help {
  width: 13px;
  margin: 0 8px;
  background: #5d5d5d;
  font: bold 15px/16px "Liberation Sans", sans-serif;
  color: #d8d8d8;
}

/* ribbon */
.ribbon {
  display: flex;
  height: 114px;
  padding-top: 1px;
  border-top: 1px solid var(--line);
  border-bottom: 1px solid #4c4c4c;
  background: linear-gradient(#cbcbcb, #a0a0a0);
}

.group {
  padding: 5px 4px 0 7px;
  border-right: 1px solid #666;
}

.group.first {
  padding: 5px 3px 0 6px;
}

.tools {
  display: flex;
}

.tool {
  display: flex;
  flex-direction: column;
  align-items: center;
  min-width: 54px;
  height: 86px;
  padding: 2px 2px 0;
  border: 1px solid transparent;
  white-space: nowrap;
  color: #000;
}

.tool.active {
  border-color: #b98f2c;
  border-radius: 2px;
  background: linear-gradient(#f5c95c, #ffd869 60%, #fff08a);
}

.tool svg {
  width: 32px;
  height: 32px;
  overflow: visible;
}

.tool span {
  margin-top: 20px;
}

.tool:disabled {
  color: #858585;
}

.drop {
  margin-top: 3px;
  border: 4px solid transparent;
  border-top: 5px solid #555;
  border-bottom: none;
}

.group-name {
  height: 18px;
  line-height: 16px;
  text-align: center;
  color: #2c2c2c;
}

.axis-name {
  font: bold 10px "Liberation Sans", sans-serif;
  fill: #c8281e;
}

/* document area */
.work {
  flex: 1;
  min-height: 0;
  display: flex;
}

.main {
  flex: 1;
  min-width: 0;
  display: flex;
  flex-direction: column;
}

.doc-tabs {
  display: flex;
  height: 33px;
  padding-top: 4px;
  background: linear-gradient(#666, #727272 8px);
}

.doc-tab {
  display: flex;
  align-items: center;
  gap: 2px;
  padding: 0 5px 0 13px;
  color: #e4e4e4;
}

.doc-tab svg {
  width: 22px;
  height: 20px;
}

.doc-tab button {
  margin-left: 9px;
}

.doc-tab button svg {
  width: 12px;
  height: 12px;
}

.doc-tab.active {
  margin-left: 2px;
  padding: 0 3px 0 7px;
  border-radius: 3px 3px 0 0;
  background: #cbcbcb;
  color: #111;
}

.doc-nav {
  display: flex;
  align-items: center;
  gap: 2px;
  margin-left: auto;
  padding: 0 2px 4px 0;
}

.doc-nav svg {
  width: 16px;
  height: 16px;
}

.viewport {
  position: relative;
  flex: 1;
  min-height: 0;
  display: flex;
  align-items: flex-start;
  gap: 1px;
  border: solid #a6a6a6;
  border-width: 5px 5px 3px;
  border-top-color: #c6c6c6;
  border-left: 6px solid #b2b2b2;
  background: var(--canvas);
  box-shadow: 0 -1px 0 var(--line), 1px 0 0 #444;
}

.model {
  position: absolute;
  inset: 0;
  width: 100%;
  height: 100%;
}

.face-light {
  filter: brightness(1.04);
}

.triad-name {
  font: 14px "Liberation Sans", sans-serif;
  text-anchor: middle;
}

.cube-front {
  font: 15px "Liberation Serif", serif;
  fill: #555;
}

.cube-bottom {
  font: italic 11px "Liberation Serif", serif;
  fill: #444;
}

/* feature tree */
.tree {
  position: relative;
  width: 312px;
}

.grip {
  display: flex;
  justify-content: center;
  align-items: center;
  height: 11px;
  border: 1px solid #888;
  background: linear-gradient(#fafafa, #d0d0d0);
}

.grip::before {
  content: "";
  width: 40px;
  border-top: 2px dotted #55648c;
}

.tree ul {
  margin: 0;
  padding: 3px 0 0;
  list-style: none;
  font-size: 16px;
  line-height: 16px;
}

.tree li {
  display: grid;
  grid-template-columns: 20px 23px auto;
  align-items: center;
  justify-content: start;
  height: 20px;
}

.tree .root {
  grid-template-columns: auto;
  padding-left: 6px;
}

.tree .l1 {
  padding-left: 20px;
}

.tree .l2 {
  padding-left: 49px;
}

.tree li input {
  grid-column: 2;
}

.tree .node {
  grid-column: 3;
}

.tree .root .node {
  grid-column: 1;
  gap: 4px;
}

.node {
  display: flex;
  align-items: center;
  gap: 6px;
  height: 18px;
  padding: 0 8px 0 0;
  border: 1px solid #aebcc2;
  background: linear-gradient(100deg, #fff, #dfeaf0);
  white-space: nowrap;
}

.node svg {
  width: 18px;
  height: 16px;
}

.node.dim {
  color: #868686;
}

.node.strong,
.bar {
  font-weight: bold;
}

.tree input[type="checkbox"] {
  appearance: none;
  display: grid;
  place-items: center;
  width: 16px;
  height: 14px;
  margin: 0;
  border: 2px solid #5d7590;
  background: #fff;
}

.tree input:checked::after {
  content: "";
  width: 9px;
  height: 5px;
  margin-bottom: 2px;
  border: solid #12305c;
  border-width: 0 0 3px 3px;
  transform: rotate(-48deg);
}

.expander {
  grid-column: 1;
  width: 11px;
  height: 11px;
  border: 1px solid #8a8a8a;
  background: #f2f2f2;
  font: 12px/8px "Liberation Sans", sans-serif;
}

.bar {
  grid-column: 2 / 4;
  display: flex;
  align-items: center;
  gap: 1px;
  width: 229px;
  height: 18px;
  padding-left: 6px;
  background: linear-gradient(#b0b0b0, #8c8c8c 50%, #a8a8a8);
}

.bar svg {
  width: 18px;
  height: 18px;
}

.bar.ordered {
  border: 1px solid #e0a030;
  background: linear-gradient(#ffd68a, #f6ac2c 50%, #ffe060);
}

.pointer {
  margin-left: auto;
  margin-right: 13px;
  border: 6px solid transparent;
  border-left: none;
  border-right: 20px solid #fff;
}

/* command bar */
.command {
  position: relative;
  display: flex;
  align-items: center;
  height: 51px;
  padding: 0 11px 0 2px;
  border: 1px solid #3c4c64;
  border-radius: 3px;
  background: #c4c6c9;
}

.steps {
  display: flex;
  margin-left: 11px;
}

.step {
  display: grid;
  place-items: center;
  width: 39px;
  height: 34px;
  border: 1px solid #a9b8c8;
  background: linear-gradient(135deg, #fff, #d4ebfa);
}

.step svg {
  width: 24px;
  height: 24px;
}

.step.current {
  width: 53px;
  height: 41px;
  border: 2px solid #cf9b62;
  background: linear-gradient(#ffc384, #fba544 55%, #f98a1c 56%, #ffb84c);
}

.step.current svg {
  width: 32px;
  height: 32px;
}

.step.off {
  background: #e6e6e6;
}

.finish {
  width: 78px;
  height: 34px;
  margin-left: 2px;
  border: 2px solid var(--accent);
  background: #e2e2e2;
}

.field {
  display: flex;
  align-items: center;
  gap: 16px;
  height: 34px;
  margin-left: 9px;
  padding-left: 8px;
  border-left: 1px solid #555;
}

.field input {
  width: 169px;
  height: 24px;
  padding: 0 2px;
  border: 1px solid var(--accent);
  background: #fff;
  font: inherit;
  outline: none;
}

.field input::selection {
  background: #0078d7;
  color: #fff;
}

/* right side strip */
.side {
  width: 32px;
  display: flex;
  flex-direction: column;
  align-items: center;
  gap: 19px;
  padding-top: 9px;
}

.side svg {
  width: 25px;
  height: 22px;
}

.side-tab {
  display: flex;
  flex-direction: column;
  align-items: center;
  gap: 6px;
  width: 30px;
  height: 194px;
  margin-bottom: -4px;
  padding-top: 5px;
  align-self: flex-end;
  border-radius: 3px 0 0 3px;
  background: linear-gradient(90deg, #d6d6d6, #bfbfbf);
}

.side-tab span {
  writing-mode: vertical-rl;
  text-orientation: sideways;
  font-size: 14px;
  line-height: 18px;
  color: #000;
}

.round-help {
  width: 20px;
  height: 20px;
  margin: 1px 0;
  border: 2px solid #1b438a;
  border-radius: 50%;
  background: #2d62b4;
  font: bold 15px/16px "Liberation Sans", sans-serif;
  color: #fff;
}

/* prompt and status */
.prompt {
  display: flex;
  height: 37px;
  padding-right: 158px;
  border-top: 9px solid #565656;
  background: #777;
}

.prompt-label {
  display: flex;
  align-items: center;
  gap: 6px;
  width: 89px;
  padding-left: 6px;
  font-weight: bold;
  color: #fff;
}

.prompt-label svg {
  width: 25px;
  height: 12px;
}

.prompt-text {
  flex: 1;
  padding-left: 1px;
  background: #fff;
  font-size: 17px;
  line-height: 30px;
}

.status {
  display: flex;
  align-items: center;
  height: 28px;
  border-top: 1px solid #2c2c2c;
  background: linear-gradient(#4c4c4c, #363636);
}

.status .sep.first {
  margin-left: auto;
  margin-right: 331px;
}

.status .sep.second {
  margin-right: 24px;
}

.status input[type="text"] {
  width: 178px;
  height: 22px;
  padding: 0 4px;
  border: none;
  background: #fff;
  font: inherit;
}

.status input::placeholder {
  color: #aaa;
}

.status-icons {
  display: flex;
  gap: 8px;
  padding: 0 4px;
}

.status button svg {
  width: 20px;
  height: 20px;
}

.zoom {
  display: flex;
  align-items: center;
  gap: 3px;
  padding: 0 2px;
}

.zoom input {
  appearance: none;
  width: 142px;
  height: 20px;
  margin: 0;
  background: linear-gradient(#eee, #eee) center / 100% 1px no-repeat;
}

.zoom input::-webkit-slider-thumb {
  appearance: none;
  width: 14px;
  height: 18px;
  border: 2px solid #9fb6d4;
  border-radius: 1px 1px 7px 7px;
  background: #4d6a94;
}

.status-end {
  margin: 0 4px;
}

.taskbar {
  display: flex;
  height: 6px;
  padding-left: 60px;
  background: #2f3134;
}

.task-search {
  width: 430px;
  background: #f0f0f0;
}

.task-active {
  width: 61px;
  margin-left: 498px;
  background: #666;
}

.watermark {
  position: absolute;
  right: 34px;
  bottom: 26px;
  font-family: "Liberation Sans", "Noto Sans CJK SC", sans-serif;
  font-size: 50px;
  line-height: 64px;
  color: #fff;
  text-shadow: 2px 3px 1px #000;
}
```
